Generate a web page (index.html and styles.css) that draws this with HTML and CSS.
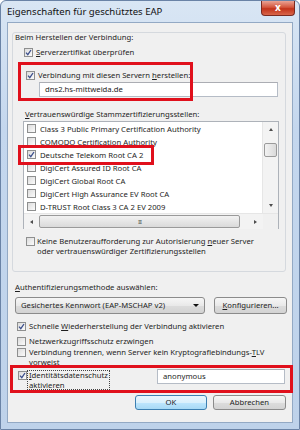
FILE: index.html
```html
<!DOCTYPE html>
<html lang="de">
<head>
    <meta charset="UTF-8">
    <title>Eigenschaften für geschütztes EAP</title>
    <link rel="stylesheet" href="styles.css">
</head>
<body>
    <div class="window">
        <div class="titlebar">
            <span class="title">Eigenschaften für geschütztes EAP</span>
            <span class="close">x</span>
        </div>

        <div class="client">
            <div class="panel">
                <div class="text head">Beim Herstellen der Verbindung:</div>
                <div class="check row-server"><span class="cb on"></span><span><u>S</u>erverzertifikat überprüfen</span></div>
                <div class="check row-servers"><span class="cb on"></span><span>Verbindung mit diesen Servern <u>h</u>erstellen:</span></div>
                <div class="field server-name">dns2.hs-mittweida.de</div>
                <div class="text list-label"><u>V</u>ertrauenswürdige Stammzertifizierungsstellen:</div>

                <div class="listbox">
                    <div class="list-main">
                        <div class="list-items">
                            <div class="item"><span class="cb"></span>Class 3 Public Primary Certification Authority</div>
                            <div class="item"><span class="cb"></span>COMODO Certification Authority</div>
                            <div class="item"><span class="cb on"></span>Deutsche Telekom Root CA 2</div>
                            <div class="item"><span class="cb"></span>DigiCert Assured ID Root CA</div>
                            <div class="item"><span class="cb"></span>DigiCert Global Root CA</div>
                            <div class="item"><span class="cb"></span>DigiCert High Assurance EV Root CA</div>
                            <div class="item"><span class="cb"></span>D-TRUST Root Class 3 CA 2 EV 2009</div>
                        </div>
                        <div class="vscroll">
                            <span class="arrow up"></span>
                            <span class="vtrack"><span class="vthumb"></span></span>
                            <span class="arrow down"></span>
                        </div>
                    </div>
                    <div class="hscroll">
                        <span class="arrow left"></span>
                        <span class="htrack"><span class="hthumb"><span class="grip">III</span></span></span>
                        <span class="arrow right"></span>
                        <span class="corner"></span>
                    </div>
                </div>

                <div class="check row-prompt"><span class="cb"></span><span>Keine Benutzeraufforderung zur Autorisierung <u>n</u>euer Server<br>oder vertrauenswürdiger Zertifizierungsstellen</span></div>
            </div>

            <div class="text auth-label"><u>A</u>uthentifizierungsmethode auswählen:</div>
            <div class="method-row">
                <div class="combo">Gesichertes Kennwort (EAP-MSCHAP v2)<span class="drop"></span></div>
                <div class="btn"><u>K</u>onfigurieren...</div>
            </div>

            <div class="check opt opt-first"><span class="cb on"></span><span>Schnelle <u>W</u>iederherstellung der Verbindung aktivieren</span></div>
            <div class="check opt opt-nap"><span class="cb"></span><span>Netzwerkzugriffsschutz erzwingen</span></div>
            <div class="check opt opt-tlv"><span class="cb"></span><span>Verbindung trennen, wenn Server kein Kryptografiebindungs-<u>T</u>LV<br>vorweist</span></div>

            <div class="identity-row">
                <div class="check"><span class="cb on"></span><span class="focus"><u>I</u>dentitätsdatenschutz<br>aktivieren</span></div>
                <div class="field anon">anonymous</div>
            </div>

            <div class="buttons">
                <div class="btn default">OK</div>
                <div class="btn">Abbrechen</div>
            </div>
        </div>

        <!-- red highlight boxes drawn over the dialog -->
        <div class="mark mark-servers"></div>
        <div class="mark mark-telekom"></div>
        <div class="mark mark-identity"></div>
    </div>
</body>
</html>
```

FILE: styles.css
```css
body {
    margin: 0;
    background-color: #fff;
    font-family: "Noto Sans", "Open Sans", sans-serif;
    font-size: 7.7px;
    color: #1e1e1e;
}
u {
    text-decoration: underline;
}
.window {
    position: relative;
    width: 300px;
    height: 430px;
    box-sizing: border-box;
    padding: 0 6px 6px 6px;
    border: 1px solid #6a83a6;
    border-radius: 6px 6px 0 0;
    background: linear-gradient(#d9e6f4, #c4d7ee 30%, #bed2ea);
    display: flex;
    flex-direction: column;
}
.titlebar {
    height: 21px;
    display: flex;
    align-items: flex-start;
}
.title {
    margin-top: 5px;
    font-size: 9.6px;
    line-height: 12px;
    color: #111;
}
.close {
    margin-left: auto;
    margin-right: -2px;
    width: 34px;
    height: 15px;
    box-sizing: border-box;
    border: 1px solid #7a2a20;
    border-top: none;
    border-radius: 0 0 4px 4px;
    background: linear-gradient(#eaa394, #d4563d 45%, #c2331a 55%, #d8664a);
    color: #fff;
    font-size: 10px;
    font-weight: bold;
    line-height: 13px;
    text-align: center;
}
.client {
    flex: 1;
    border: 1px solid #93a9c4;
    background-color: #f0f0f0;
    display: flex;
    flex-direction: column;
}
.text {
    line-height: 10px;
    white-space: nowrap;
}
.check {
    display: flex;
    align-items: flex-start;
    line-height: 10px;
    white-space: nowrap;
}
.cb {
    flex: none;
    width: 9px;
    height: 9px;
    box-sizing: border-box;
    border: 1px solid #8e8f8f;
    background: linear-gradient(135deg, #dcdcdc, #fbfbfb);
    margin-top: 1px;
    margin-right: 3px;
}
.cb.on {
    background:
        url("data:image/svg+xml,%3Csvg xmlns='http://www.w3.org/2000/svg' viewBox='0 0 7 7'%3E%3Cpath d='M1 3.6 L2.8 5.6 L6 1' fill='none' stroke='%233c4f8c' stroke-width='1.3'/%3E%3C/svg%3E") center / 7px 7px no-repeat,
        linear-gradient(135deg, #dcdcdc, #fbfbfb);
}

/* connection panel */
.panel {
    margin: 9px 0 0 4px;
    width: 274px;
    height: 240px;
    box-sizing: border-box;
    border: 1px solid #d5d9de;
    border-radius: 3px;
}
.head {
    margin: -1px 0 0 2px;
}
.row-server {
    margin: 5px 0 0 11px;
}
.row-servers {
    margin: 13px 0 0 13px;
}
.field {
    box-sizing: border-box;
    height: 15px;
    border: 1px solid #b5bcc6;
    border-top-color: #abadb3;
    background-color: #fff;
    padding-left: 5px;
    line-height: 13px;
}
.server-name {
    margin: 2px 0 0 26px;
    width: 239px;
}
.list-label {
    margin: 12px 0 0 12px;
}
.listbox {
    margin: 2px 0 0 10px;
    width: 256px;
    height: 108px;
    box-sizing: border-box;
    border: 1px solid #adb2b9;
    background-color: #fff;
    display: flex;
    flex-direction: column;
}
.list-main {
    height: 91px;
    display: flex;
}
.list-items {
    flex: 1;
    overflow: hidden;
}
.item {
    height: 13px;
    display: flex;
    align-items: center;
    padding-left: 3px;
    white-space: nowrap;
}
.item .cb {
    margin: 0 4px 0 0;
}
.vscroll {
    width: 15px;
    display: flex;
    flex-direction: column;
    background-color: #f3f3f3;
    border-left: 1px solid #e6e6e6;
}
.vtrack {
    flex: 1;
    padding-top: 6px;
}
.vthumb {
    display: block;
    margin: 0 1px;
    height: 12px;
    border: 1px solid #9a9a9a;
    border-radius: 2px;
    background: linear-gradient(90deg, #f2f2f2, #dadada);
}
.hscroll {
    height: 15px;
    display: flex;
    background-color: #f3f3f3;
    border-top: 1px solid #e6e6e6;
}
.htrack {
    flex: 1;
    padding-right: 8px;
}
.hthumb {
    display: flex;
    justify-content: center;
    align-items: center;
    margin-top: 1px;
    height: 11px;
    border: 1px solid #9a9a9a;
    border-radius: 2px;
    background: linear-gradient(#f2f2f2, #dadada);
}
.grip {
    font-size: 6px;
    color: #666;
    letter-spacing: -1px;
}
.corner {
    width: 15px;
    background-color: #f0f0f0;
}
.arrow {
    width: 15px;
    height: 15px;
    display: flex;
    justify-content: center;
    align-items: center;
}
.arrow::before {
    content: "";
    border: 2.5px solid transparent;
}
.arrow.up::before {
    border-bottom: 3px solid #4d4d4d;
    border-top: none;
}
.arrow.down::before {
    border-top: 3px solid #4d4d4d;
    border-bottom: none;
}
.arrow.left::before {
    border-right: 3px solid #4d4d4d;
    border-left: none;
}
.arrow.right::before {
    border-left: 3px solid #4d4d4d;
    border-right: none;
}
.row-prompt {
    margin: 7px 0 0 13px;
}
.row-prompt .cb {
    margin-right: 2px;
}

/* method and options */
.auth-label {
    margin: 10px 0 0 7px;
}
.method-row {
    margin: 5px 0 0 7px;
    display: flex;
    gap: 9px;
    height: 17px;
}
.combo, .btn {
    box-sizing: border-box;
    border: 1px solid #8b8b8b;
    border-radius: 3px;
    background: linear-gradient(#f6f6f6, #e9e9e9 50%, #dcdcdc 51%, #d3d3d3);
    line-height: 15px;
    white-space: nowrap;
}
.combo {
    width: 190px;
    padding-left: 5px;
    display: flex;
    align-items: center;
}
.drop {
    margin-left: auto;
    margin-right: 5px;
    border: 3px solid transparent;
    border-top: 3px solid #111;
    border-bottom: none;
}
.btn {
    width: 73px;
    text-align: center;
}
.opt {
    margin-left: 9px;
}
.opt-first {
    margin-top: 7px;
}
.opt-nap {
    margin-top: 5px;
}
.opt-tlv {
    margin-top: 1px;
}
.identity-row {
    margin: 3px 7px 0 10px;
    display: flex;
    align-items: flex-start;
}
.identity-row .cb {
    margin-top: 1px;
    margin-right: 0;
}
.focus {
    padding: 0 2px;
    outline: 1px dotted #444;
    outline-offset: -1px;
}
.anon {
    margin-left: auto;
    margin-top: -1px;
    width: 128px;
}
.buttons {
    margin: 5px 6px 0 0;
    display: flex;
    justify-content: flex-end;
    gap: 6px;
    height: 15px;
}
.buttons .btn {
    line-height: 13px;
}
.btn.default {
    width: 72px;
    border-color: #3c7fb1;
    background: linear-gradient(#eaf6fd, #d9f0fc 50%, #bee6fd 51%, #a7d9f5);
}

/* red highlight boxes */
.mark {
    position: absolute;
    border: 3px solid #e0101c;
    box-sizing: border-box;
}
.mark-servers {
    left: 17px;
    top: 61px;
    width: 175px;
    height: 39px;
}
.mark-telekom {
    left: 17px;
    top: 144px;
    width: 136px;
    height: 20px;
}
.mark-identity {
    left: 9px;
    top: 364px;
    width: 283px;
    height: 28px;
}
```
